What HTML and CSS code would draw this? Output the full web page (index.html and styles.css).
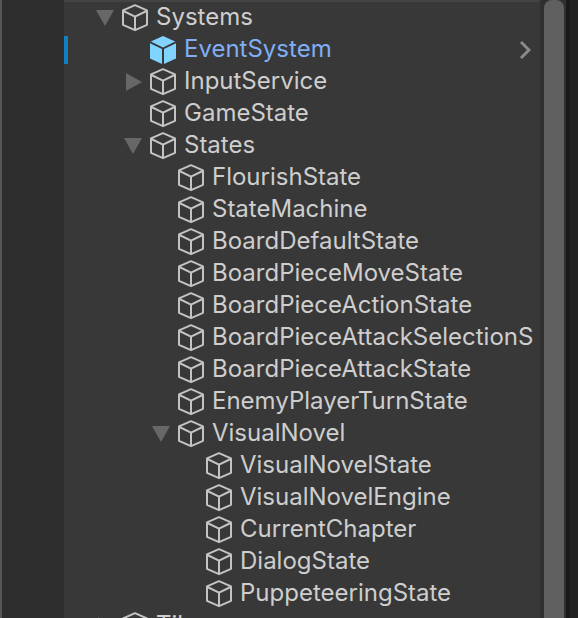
FILE: index.html
```html
<!DOCTYPE html>
<html lang="en">
<head>
<meta charset="utf-8">
<title>Hierarchy</title>
<link rel="stylesheet" href="styles.css">
</head>
<body>
<svg class="symbols" aria-hidden="true">
  <symbol id="cube" viewBox="0 0 28 28">
    <path d="M14 1.2 26 6.4V20.8L14 26.2 2 20.8V6.4Z M2.4 7 14 12.6 25.6 7 M14 12.6V26" fill="none" stroke="currentColor" stroke-width="2" stroke-linejoin="round"/>
  </symbol>
  <symbol id="prefab" viewBox="0 0 28 28">
    <path d="M14 0 26.2 5.6 14 11.5 1.8 5.6Z M1 7.2 13 13V28L1 22.4Z M27 7.2 15 13V28L27 22.4Z" fill="currentColor"/>
  </symbol>
  <symbol id="open" viewBox="0 0 18 16">
    <path d="M0 0H18L9 16Z" fill="currentColor"/>
  </symbol>
  <symbol id="closed" viewBox="0 0 18 18">
    <path d="M2 0V18L18 9Z" fill="currentColor"/>
  </symbol>
</svg>
<main class="window">
  <div class="gutter"></div>
  <ul class="tree">
    <li><div class="row"><button class="fold" aria-label="Collapse Systems"><svg class="down"><use href="#open"/></svg></button><svg class="cube"><use href="#cube"/></svg><span class="name">Systems</span></div>
      <ul>
        <li><div class="row prefab"><span class="fold"></span><svg class="cube"><use href="#prefab"/></svg><span class="name">EventSystem</span><button class="enter" aria-label="Open prefab"><svg viewBox="0 0 12 20"><path d="M2 2 10 10 2 18" fill="none" stroke="currentColor" stroke-width="3"/></svg></button></div></li>
        <li><div class="row"><button class="fold" aria-label="Expand InputService"><svg class="right"><use href="#closed"/></svg></button><svg class="cube"><use href="#cube"/></svg><span class="name">InputService</span></div></li>
        <li><div class="row"><span class="fold"></span><svg class="cube"><use href="#cube"/></svg><span class="name">GameState</span></div></li>
        <li><div class="row"><button class="fold" aria-label="Collapse States"><svg class="down"><use href="#open"/></svg></button><svg class="cube"><use href="#cube"/></svg><span class="name">States</span></div>
          <ul>
            <li><div class="row"><span class="fold"></span><svg class="cube"><use href="#cube"/></svg><span class="name">FlourishState</span></div></li>
            <li><div class="row"><span class="fold"></span><svg class="cube"><use href="#cube"/></svg><span class="name">StateMachine</span></div></li>
            <li><div class="row"><span class="fold"></span><svg class="cube"><use href="#cube"/></svg><span class="name">BoardDefaultState</span></div></li>
            <li><div class="row"><span class="fold"></span><svg class="cube"><use href="#cube"/></svg><span class="name">BoardPieceMoveState</span></div></li>
            <li><div class="row"><span class="fold"></span><svg class="cube"><use href="#cube"/></svg><span class="name">BoardPieceActionState</span></div></li>
            <li><div class="row"><span class="fold"></span><svg class="cube"><use href="#cube"/></svg><span class="name">BoardPieceAttackSelectionS</span></div></li>
            <li><div class="row"><span class="fold"></span><svg class="cube"><use href="#cube"/></svg><span class="name">BoardPieceAttackState</span></div></li>
            <li><div class="row"><span class="fold"></span><svg class="cube"><use href="#cube"/></svg><span class="name">EnemyPlayerTurnState</span></div></li>
            <li><div class="row"><button class="fold" aria-label="Collapse VisualNovel"><svg class="down"><use href="#open"/></svg></button><svg class="cube"><use href="#cube"/></svg><span class="name">VisualNovel</span></div>
              <ul>
                <li><div class="row"><span class="fold"></span><svg class="cube"><use href="#cube"/></svg><span class="name">VisualNovelState</span></div></li>
                <li><div class="row"><span class="fold"></span><svg class="cube"><use href="#cube"/></svg><span class="name">VisualNovelEngine</span></div></li>
                <li><div class="row"><span class="fold"></span><svg class="cube"><use href="#cube"/></svg><span class="name">CurrentChapter</span></div></li>
                <li><div class="row"><span class="fold"></span><svg class="cube"><use href="#cube"/></svg><span class="name">DialogState</span></div></li>
                <li><div class="row"><span class="fold"></span><svg class="cube"><use href="#cube"/></svg><span class="name">PuppeteeringState</span></div></li>
              </ul>
            </li>
          </ul>
        </li>
      </ul>
    </li>
    <li><div class="row"><button class="fold" aria-label="Expand Tiles"><svg class="right"><use href="#closed"/></svg></button><svg class="cube"><use href="#cube"/></svg><span class="name">Tiles</span></div></li>
  </ul>
  <div class="scrollbar"><div class="thumb"></div></div>
  <div class="edge"></div>
</main>
</body>
</html>
```
FILE: styles.css
```css
* {
  box-sizing: border-box;
}

body {
  margin: 0;
  background: #383838;
  color: #cecece;
  font: 24px/32px Inter, "Liberation Sans", sans-serif;
}

.symbols {
  display: none;
}

.window {
  display: flex;
  height: 100vh;
  overflow: hidden;
}

.gutter {
  flex: 0 0 64px;
  background: #2d2d2d;
  border-left: 2px solid #555;
}

ul {
  margin: 0;
  padding: 0;
  list-style: none;
}

.tree {
  position: relative;
  flex: 1;
  min-width: 0;
  overflow: hidden;
  border-top: 2px solid #444;
}

.tree > li {
  padding-left: 28px;
}

.tree ul {
  padding-left: 28px;
}

.row {
  display: flex;
  align-items: center;
  height: 32px;
}

button {
  padding: 0;
  border: 0;
  background: none;
  font: inherit;
}

.fold {
  display: flex;
  flex: 0 0 26px;
  justify-content: center;
  margin-right: 3px;
  color: #676767;
}

.down {
  width: 18px;
  height: 16px;
}

.right {
  width: 18px;
  height: 18px;
}

.cube {
  flex: none;
  width: 28px;
  height: 28px;
  margin-right: 7px;
  color: #c4c4c4;
}

.name {
  padding-bottom: 2px;
  white-space: nowrap;
}

.prefab {
  color: #7faef5;
}

.prefab::before {
  content: "";
  position: absolute;
  left: 0;
  width: 4px;
  height: 28px;
  background: #0f81be;
}

.prefab .cube {
  color: #81d4ff;
}

.enter {
  display: flex;
  margin: 0 9px 0 auto;
  color: #8b8b8b;
}

.enter svg {
  width: 12px;
  height: 20px;
}

.scrollbar {
  flex: 0 0 26px;
  padding: 0 2px 0 4px;
  background: #303030;
}

.thumb {
  height: 100%;
  background: #5f5f5f;
  border-radius: 8px 8px 0 0;
}

.edge {
  flex: 0 0 12px;
  background: #222;
  border-left: 4px solid #191919;
}
```
